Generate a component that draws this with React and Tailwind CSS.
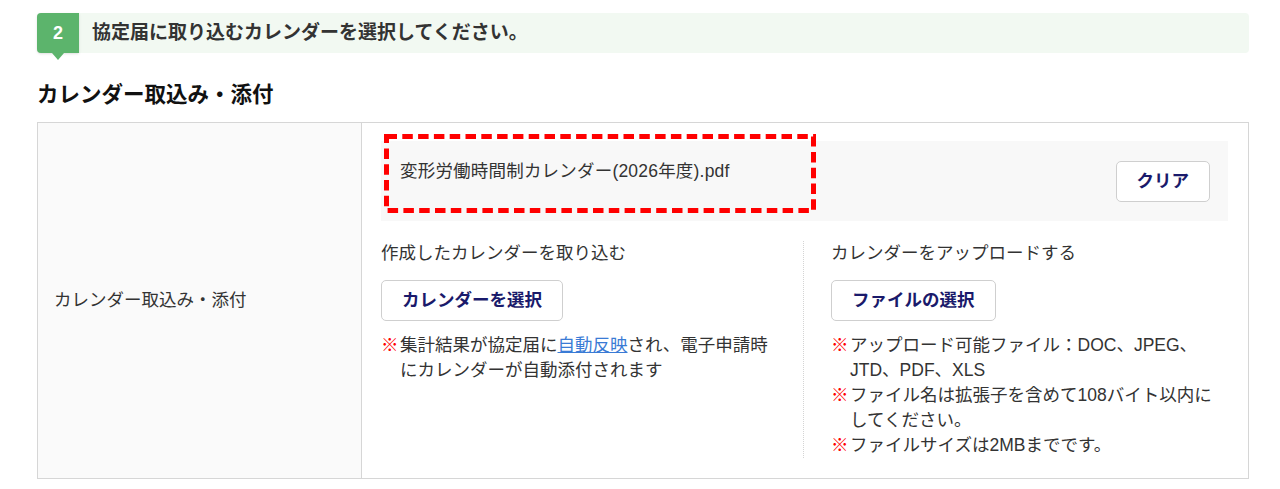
import React from "react";

const font = { fontFamily: '"Liberation Sans", "Noto Sans CJK JP", sans-serif' };

const Btn = ({ children }) => (
  <button className="h-[41px] px-[20px] bg-white border border-[#cfcfcf] rounded-[5px] text-[17.5px] font-bold text-[#1a1a6b] leading-none">
    {children}
  </button>
);

const Note = ({ children }) => (
  <div className="flex">
    <span className="text-[#ff0000] w-[19px] shrink-0">※</span>
    <span>{children}</span>
  </div>
);

const App = () => {
  return (
    <div className="w-[1280px] h-[489px] bg-white text-[#333] pl-[37px] pr-[31px] pt-[13px] overflow-hidden" style={font}>
      {/* Step banner */}
      <div className="h-[40px] bg-[#f2f9f2] rounded-[4px] flex items-center">
        <div className="relative w-[42px] h-[40px] bg-[#5cb46c] rounded-l-[4px] flex items-center justify-center text-white font-bold text-[18px] shadow-sm">
          2
          <div className="absolute left-1/2 -translate-x-1/2 top-[40px] w-0 h-0 border-l-[6px] border-r-[6px] border-t-[7px] border-l-transparent border-r-transparent border-t-[#5cb46c]" />
        </div>
        <p className="ml-[13px] text-[19px] font-bold text-[#333]">協定届に取り込むカレンダーを選択してください。</p>
      </div>

      {/* Section heading */}
      <h2 className="mt-[27px] mb-[12px] h-[30px] leading-[30px] text-[21.5px] font-bold text-[#111]">カレンダー取込み・添付</h2>

      {/* Table */}
      <div className="flex border border-[#d6d6d6] h-[357px] text-[17.5px] leading-[25px]">
        <div className="w-[324px] shrink-0 bg-[#fafafa] border-r border-[#d6d6d6] flex items-center pl-[16px]">
          カレンダー取込み・添付
        </div>
        <div className="flex-1 pt-[18px] pl-[19px] pr-[20px] pb-[21px]">
          {/* Selected file */}
          <div className="relative h-[80px] bg-[#f8f8f8] flex justify-between items-start pl-[19px] pr-[18px] pt-[18px]">
            <span className="tracking-[0.2px]">変形労働時間制カレンダー(2026年度).pdf</span>
            <div className="mt-[2px]">
              <Btn>クリア</Btn>
            </div>
            <svg className="absolute left-[3px] top-[-7px]" width="432" height="79">
              <rect x="2.5" y="2.5" width="427" height="74" fill="none" stroke="#ff0000" strokeWidth="5" strokeDasharray="10.5 5.3" />
            </svg>
          </div>

          {/* Two options */}
          <div className="flex mt-[20px]">
            <div className="w-[423px] shrink-0 pr-[30px] border-r border-dotted border-[#d4d4d4]">
              <p>作成したカレンダーを取り込む</p>
              <div className="mt-[14px]">
                <Btn>カレンダーを選択</Btn>
              </div>
              <div className="mt-[12px]">
                <Note>
                  集計結果が協定届に<span className="text-[#3a7bd5] underline">自動反映</span>され、電子申請時にカレンダーが自動添付されます
                </Note>
              </div>
            </div>
            <div className="flex-1 pl-[27px]">
              <p>カレンダーをアップロードする</p>
              <div className="mt-[14px]">
                <Btn>ファイルの選択</Btn>
              </div>
              <div className="mt-[12px]">
                <Note>アップロード可能ファイル：DOC、JPEG、JTD、PDF、XLS</Note>
                <Note>ファイル名は拡張子を含めて108バイト以内にしてください。</Note>
                <Note>ファイルサイズは2MBまでです。</Note>
              </div>
            </div>
          </div>
        </div>
      </div>
    </div>
  );
};

export default App;
